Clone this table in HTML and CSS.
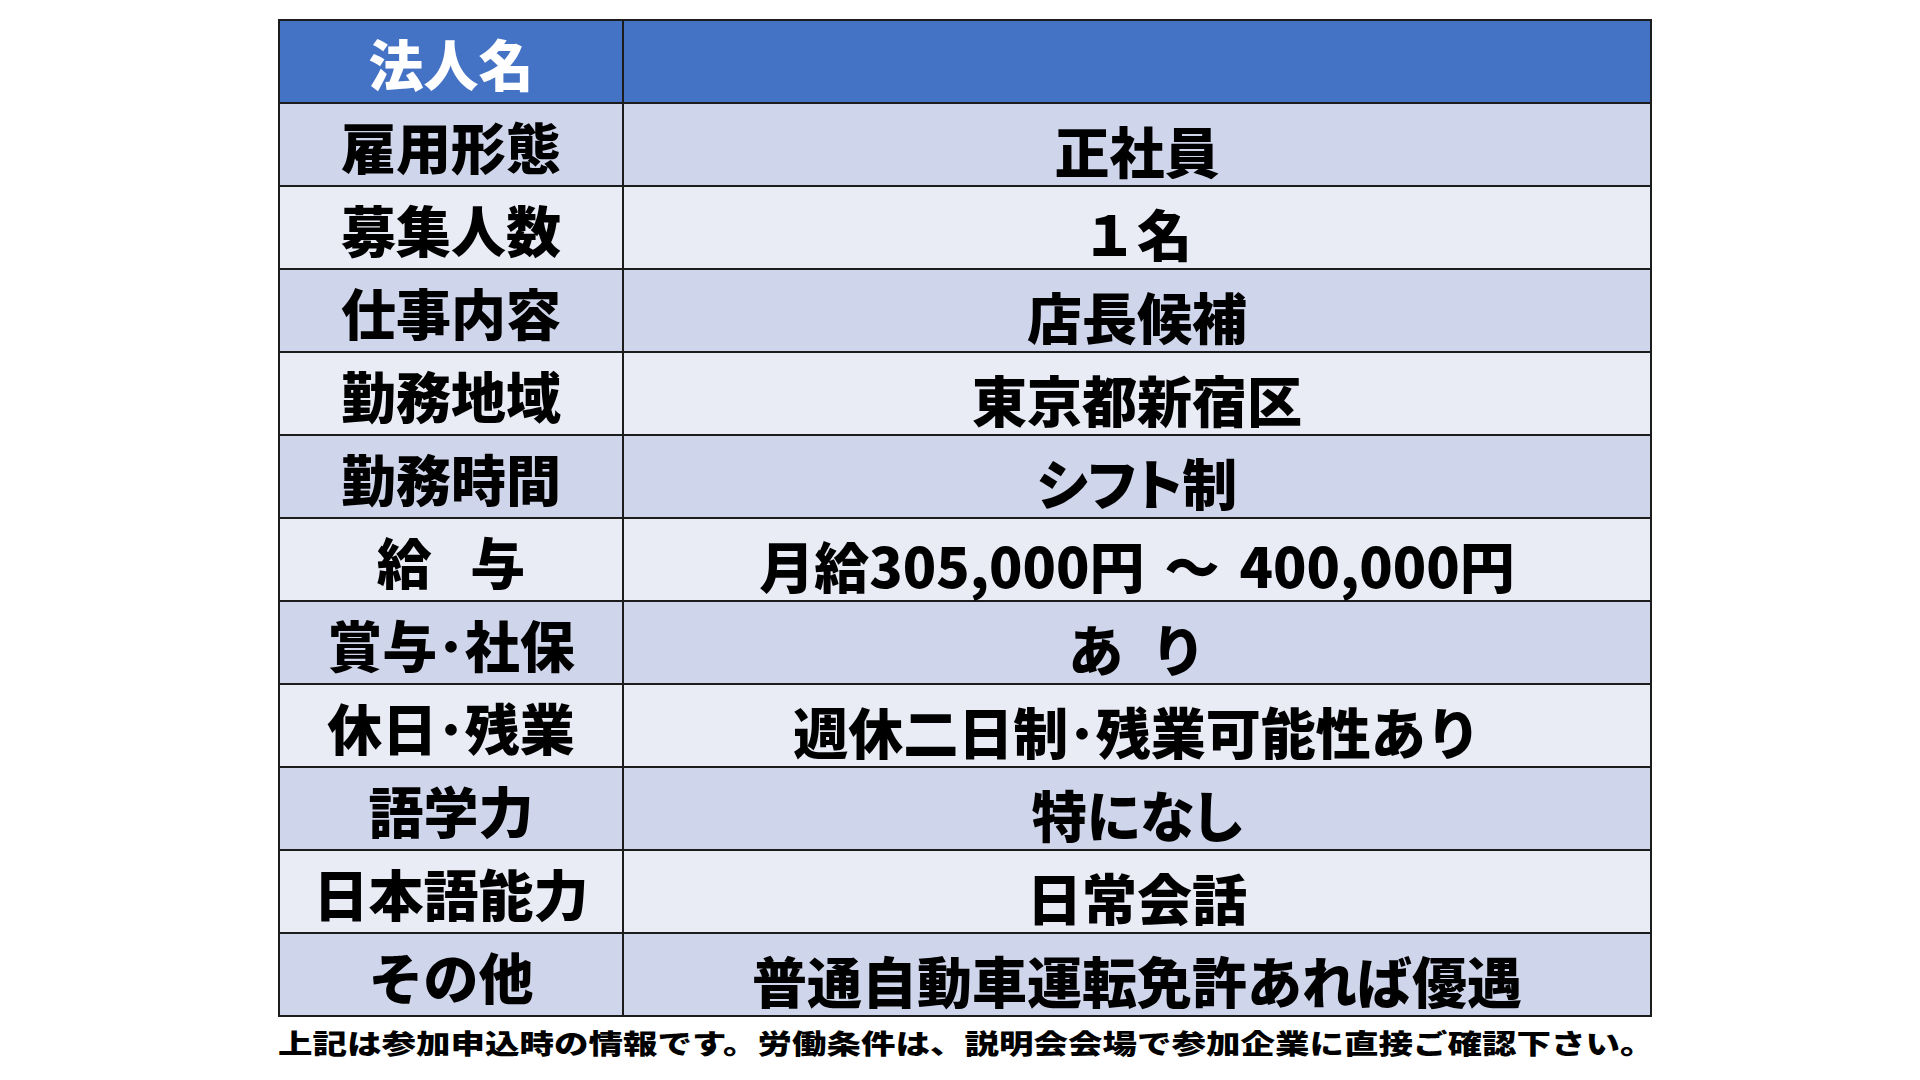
FILE: index.html
```html
<!DOCTYPE html>
<html lang="ja">
<head>
<meta charset="utf-8">
<title>求人情報</title>
<link rel="stylesheet" href="styles.css">
</head>
<body>
<main class="page">
  <div class="grid">
    <div class="cell head key">法人名</div>
    <div class="cell head val"></div>

    <div class="cell odd key">雇用形態</div>
    <div class="cell odd val">正社員</div>

    <div class="cell even key">募集人数</div>
    <div class="cell even val">１名</div>

    <div class="cell odd key">仕事内容</div>
    <div class="cell odd val">店長候補</div>

    <div class="cell even key">勤務地域</div>
    <div class="cell even val">東京都新宿区</div>

    <div class="cell odd key">勤務時間</div>
    <div class="cell odd val prop">シフト制</div>

    <div class="cell even key">給&ensp;&thinsp;与</div>
    <div class="cell even val">月給305,000円<span class="tilde">～</span>400,000円</div>

    <div class="cell odd key">賞与･社保</div>
    <div class="cell odd val">あ&ensp;り</div>

    <div class="cell even key">休日･残業</div>
    <div class="cell even val">週休二日制･残業可能性あり</div>

    <div class="cell odd key">語学力</div>
    <div class="cell odd val prop">特になし</div>

    <div class="cell even key">日本語能力</div>
    <div class="cell even val">日常会話</div>

    <div class="cell odd key">その他</div>
    <div class="cell odd val">普通自動車運転免許あれば優遇</div>
  </div>
  <p class="note">上記は参加申込時の情報です。労働条件は、説明会会場で参加企業に直接ご確認下さい。</p>
</main>
</body>
</html>
```
FILE: styles.css
```css
html, body {
  margin: 0;
  padding: 0;
  background: #ffffff;
}

body {
  width: 1920px;
  height: 1080px;
  overflow: hidden;
  font-family: "Noto Sans CJK JP", "Noto Sans", sans-serif;
  font-weight: 900;
  color: #000000;
}

.page {
  padding: 19px 0 0 278px;
}

.grid {
  width: 1370px;
  display: grid;
  grid-template-columns: 342px 1fr;
  grid-auto-rows: 81px;
  gap: 2px;
  padding: 2px;
  background: #1c1c1c;
}

.cell {
  display: flex;
  align-items: center;
  justify-content: center;
  line-height: 1;
  white-space: nowrap;
}

.key {
  font-size: 55px;
  padding-top: 1px;
}

.val {
  font-size: 55px;
  padding-top: 10px;
}

.prop {
  font-feature-settings: "palt" 1;
}

.head {
  background: #4472c4;
  color: #ffffff;
}

.odd {
  background: #cfd5ea;
}

.even {
  background: #e9ebf5;
}

.tilde {
  margin: 0 20px;
}

.note {
  margin: 11px 0 0 0;
  font-size: 34.5px;
  line-height: 1;
  white-space: nowrap;
  transform: scaleY(0.8);
  transform-origin: left top;
}
```
